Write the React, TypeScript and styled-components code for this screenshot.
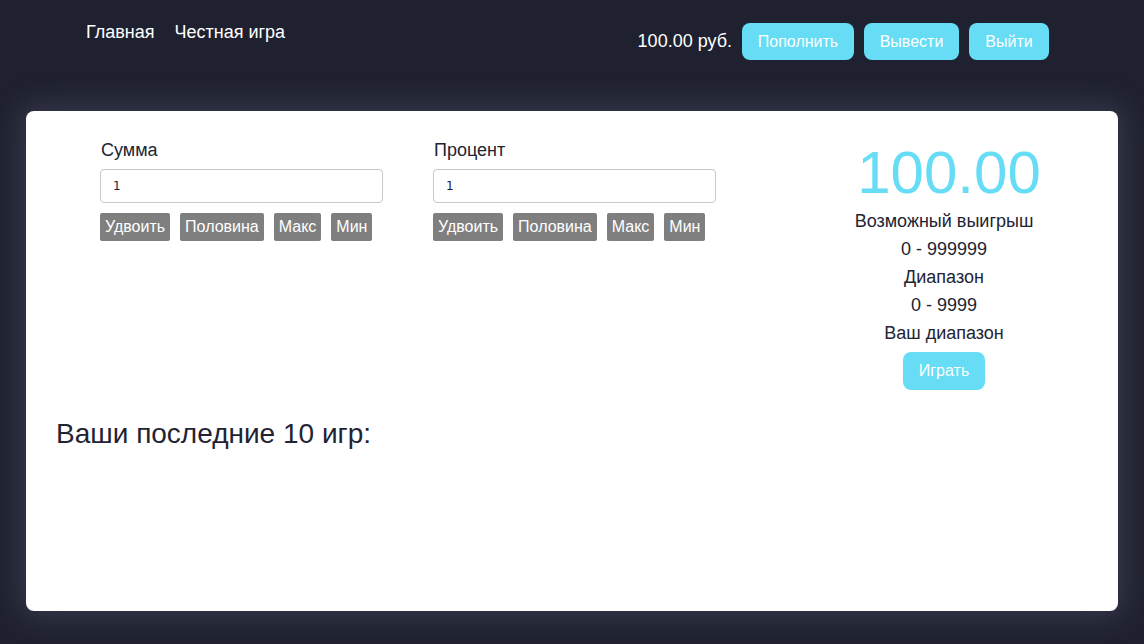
import React from "react";
import styled, { createGlobalStyle } from "styled-components";

const GlobalStyle = createGlobalStyle`
  html, body {
    margin: 0;
    padding: 0;
    background: #1f2130;
    font-family: "Liberation Sans", Arial, sans-serif;
  }
  * {
    box-sizing: border-box;
  }
`;

const Page = styled.div`
  min-height: 644px;
  padding-bottom: 33px;
`;

const Header = styled.header`
  display: flex;
  justify-content: space-between;
  align-items: flex-start;
  padding: 0 95px 0 86px;
  height: 61px;
`;

const Nav = styled.nav`
  display: flex;
  gap: 20px;
  margin-top: 22px;
`;

const NavLink = styled.a`
  color: #ffffff;
  font-size: 18px;
  line-height: 20px;
  text-decoration: none;
  cursor: pointer;
`;

const Account = styled.div`
  display: flex;
  align-items: center;
  gap: 10px;
  margin-top: 23px;
`;

const Balance = styled.span`
  color: #ffffff;
  font-size: 18px;
`;

const AccentButton = styled.button<{ $width: number; $height?: number }>`
  width: ${(p) => p.$width}px;
  height: ${(p) => p.$height ?? 37}px;
  border: none;
  border-radius: 8px;
  background: #66ddf5;
  color: #ffffff;
  font-family: inherit;
  font-size: 16px;
  cursor: pointer;
`;

const Card = styled.main`
  margin: 50px 26px 0;
  height: 500px;
  background: #ffffff;
  border-radius: 8px;
  box-shadow: 0 0 30px 6px rgba(120, 122, 150, 0.28);
  padding: 29px 30px;
  color: #222433;
`;

const Controls = styled.div`
  display: flex;
  justify-content: space-between;
  padding-left: 44px;
`;

const Fields = styled.div`
  display: flex;
  gap: 50px;
`;

const Field = styled.div`
  display: flex;
  flex-direction: column;
  width: 283px;
`;

const Label = styled.label`
  font-size: 18px;
  line-height: 20px;
  padding-left: 1px;
  margin-bottom: 9px;
`;

const Input = styled.input`
  height: 34px;
  width: 100%;
  border: 1px solid #c8c8c8;
  border-radius: 4px;
  padding: 0 12px;
  font-family: "DejaVu Sans", sans-serif;
  font-size: 12px;
  color: #1b1d3a;
  outline: none;
`;

const QuickRow = styled.div`
  display: flex;
  gap: 10px;
  margin-top: 10px;
`;

const QuickButton = styled.button`
  height: 28px;
  padding: 0 5px;
  border: none;
  border-radius: 2px;
  background: #7f7f7f;
  color: #ffffff;
  font-family: inherit;
  font-size: 16px;
  cursor: pointer;
`;

const Summary = styled.div`
  display: flex;
  flex-direction: column;
  align-items: center;
  width: 200px;
  margin-right: 44px;
`;

const Payout = styled.div`
  color: #66ddf5;
  font-size: 60px;
  line-height: 64px;
  margin-top: 1px;
  margin-bottom: 2px;
  padding-left: 10px;
`;

const InfoLine = styled.div`
  font-size: 18px;
  line-height: 28px;
  white-space: nowrap;
`;

const PlayButton = styled(AccentButton)`
  margin-top: 5px;
`;

const HistoryTitle = styled.h2`
  margin: 28px 0 0;
  font-size: 28px;
  font-weight: normal;
  line-height: 32px;
`;

const amountActions = ["Удвоить", "Половина", "Макс", "Мин"];

function BetField({ label }: { label: string }) {
  return (
    <Field>
      <Label>{label}</Label>
      <Input defaultValue="1" />
      <QuickRow>
        {amountActions.map((a) => (
          <QuickButton key={a}>{a}</QuickButton>
        ))}
      </QuickRow>
    </Field>
  );
}

export default function App() {
  return (
    <Page>
      <GlobalStyle />
      <Header>
        <Nav>
          <NavLink>Главная</NavLink>
          <NavLink>Честная игра</NavLink>
        </Nav>
        <Account>
          <Balance>100.00 руб.</Balance>
          <AccentButton $width={112}>Пополнить</AccentButton>
          <AccentButton $width={95}>Вывести</AccentButton>
          <AccentButton $width={80}>Выйти</AccentButton>
        </Account>
      </Header>
      <Card>
        <Controls>
          <Fields>
            <BetField label="Сумма" />
            <BetField label="Процент" />
          </Fields>
          <Summary>
            <Payout>100.00</Payout>
            <InfoLine>Возможный выигрыш</InfoLine>
            <InfoLine>0 - 999999</InfoLine>
            <InfoLine>Диапазон</InfoLine>
            <InfoLine>0 - 9999</InfoLine>
            <InfoLine>Ваш диапазон</InfoLine>
            <PlayButton $width={82} $height={38}>
              Играть
            </PlayButton>
          </Summary>
        </Controls>
        <HistoryTitle>Ваши последние 10 игр:</HistoryTitle>
      </Card>
    </Page>
  );
}
